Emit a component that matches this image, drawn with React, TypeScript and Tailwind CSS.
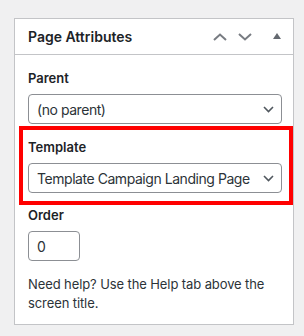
import React from "react";

const Chevron = ({ className = "" }: { className?: string }) => (
  <svg width="11" height="7" viewBox="0 0 11 7" className={className}>
    <path d="M1 1l4.5 4.5L10 1" fill="none" stroke="#50575e" strokeWidth="1.6" />
  </svg>
);

const Select = ({ value }: { value: string }) => (
  <div className="mt-[6px] flex h-[30px] w-full items-center justify-between rounded-[4px] border border-[#8c8f94] bg-white pl-[8px] pr-[7px] text-[14px] tracking-[-0.45px] text-[#2c3338]">
    <span className="whitespace-nowrap">{value}</span>
    <Chevron className="ml-[4px] shrink-0" />
  </div>
);

const Label = ({ children }: { children: React.ReactNode }) => (
  <p className="text-[13px] font-semibold leading-[20px] text-[#1d2327]">{children}</p>
);

export default function App() {
  return (
    <div
      className="min-h-[336px] bg-[#f0f0f1] pt-[18px] pl-[14px]"
      style={{ fontFamily: "Inter, 'Noto Sans', sans-serif" }}
    >
      <div className="w-[280px] border border-[#c3c4c7] bg-white">
        {/* header */}
        <div className="flex h-[36px] items-center border-b border-[#c3c4c7] pl-[13px] pr-[12px]">
          <h2 className="text-[14px] font-semibold text-[#1d2327]">Page Attributes</h2>
          <div className="ml-auto flex items-center">
            <svg width="14" height="8" viewBox="0 0 14 8">
              <path d="M1 7l6-5.5L13 7" fill="none" stroke="#787c82" strokeWidth="2" />
            </svg>
            <svg width="14" height="8" viewBox="0 0 14 8" className="ml-[11px]">
              <path d="M1 1l6 5.5L13 1" fill="none" stroke="#787c82" strokeWidth="2" />
            </svg>
            <svg width="8" height="6" viewBox="0 0 8 6" className="ml-[21px] mb-[2px]">
              <path d="M4 0L8 6H0z" fill="#646970" />
            </svg>
          </div>
        </div>

        {/* body */}
        <div className="pt-[13px] pb-[11px] pl-[13px] pr-[11px]">
          <Label>Parent</Label>
          <Select value="(no parent)" />

          <div className="mt-[2px] -ml-[9px] -mr-[11px] border-[4px] border-[#ff0000] pt-[7px] pb-[8px] pl-[5px] pr-[7px]">
            <Label>Template</Label>
            <Select value="Template Campaign Landing Page" />
          </div>

          <Label>Order</Label>
          <div className="mt-[6px] flex h-[30px] w-[52px] items-center rounded-[4px] border border-[#8c8f94] bg-white pl-[8px] text-[14px] text-[#2c3338]">
            0
          </div>

          <p className="mt-[14px] text-[13px] leading-[19px] tracking-[-0.1px] text-[#2c3338]">
            Need help? Use the Help tab above the screen title.
          </p>
        </div>
      </div>
    </div>
  );
}
